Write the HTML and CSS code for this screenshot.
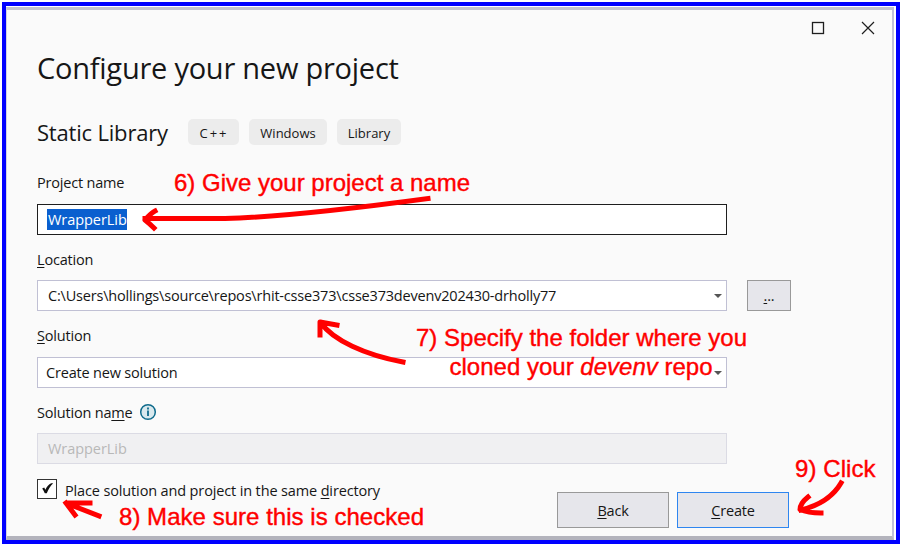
FILE: index.html
```html
<!DOCTYPE html>
<html lang="en">
<head>
<meta charset="utf-8">
<title>Configure your new project</title>
<link rel="stylesheet" href="styles.css">
</head>
<body>
<main class="frame">
  <div class="dialog">
    <header class="titlebar">
      <svg width="14" height="14" viewBox="0 0 14 14"><rect x="1.5" y="1.5" width="11" height="11" fill="none" stroke="#1e1e1e" stroke-width="1.3"/></svg>
      <svg width="14" height="14" viewBox="0 0 14 14"><path d="M1 1l12 12M13 1L1 13" stroke="#1e1e1e" stroke-width="1.2"/></svg>
    </header>
    <h1 class="title">Configure your new project</h1>
    <div class="template">
      <h2 class="template-name">Static Library</h2>
      <span class="chip chip-cpp">C++</span>
      <span class="chip chip-windows">Windows</span>
      <span class="chip chip-library">Library</span>
    </div>
    <div class="label label-first"><span>Project name</span></div>
    <div class="field field-active"><span class="selection">WrapperLib</span></div>
    <div class="label label-tight"><span><u>L</u>ocation</span></div>
    <div class="row">
      <div class="field"><span>C:\Users\hollings\source\repos\rhit-csse373\csse373devenv202430-drholly77</span><i class="caret"></i></div>
      <button class="button browse"><u>.</u>..</button>
    </div>
    <div class="label"><span><u>S</u>olution</span></div>
    <div class="field field-select"><span>Create new solution</span><i class="caret"></i></div>
    <div class="label label-tight"><span>Solution na<u>m</u>e</span>
      <svg class="info" width="18" height="18" viewBox="0 0 18 18"><circle cx="9" cy="9" r="7.3" fill="#d9e9ee" stroke="#0f6b8c" stroke-width="1.5"/><path d="M9 7.600v5.400M9 4.600v1.900" stroke="#0f6b8c" stroke-width="1.800"/></svg>
    </div>
    <div class="field field-disabled"><span class="wide">WrapperLib</span></div>
    <div class="bottom">
      <div class="check">
        <span class="box"><svg width="18" height="18" viewBox="0 0 18 18"><path d="M4.200 8.600L6.200 7.600L7.400 9.800C8.800 6.600 10.800 4.200 13.200 3.200L15.200 3.200C12.600 5.800 10.200 9.400 8.800 13.200H6.800C6 11.400 5.200 10 4.200 8.600Z" fill="#111"/></svg></span>
        <span class="check-text">Place solution and project in the same <u>d</u>irectory</span>
      </div>
      <button class="button"><u>B</u>ack</button>
      <button class="button primary"><u>C</u>reate</button>
    </div>
  </div>
</main>
<svg class="notes" width="904" height="546" viewBox="0 0 904 546">
  <g class="note-text">
    <text x="174" y="191" textLength="296">6) Give your project a name</text>
    <text x="416" y="345.500" textLength="331">7) Specify the folder where you</text>
    <text x="449.500" y="375" textLength="263">cloned your <tspan class="em">devenv</tspan> repo</text>
    <text x="119" y="525" textLength="305">8) Make sure this is checked</text>
    <text x="795" y="477" textLength="80.500">9) Click</text>
  </g>
  <g class="arrows">
    <path d="M428 198.500C350 209 280 217 225 218.500H145M155 211Q151 213 145 220Q150 224 154 228"/>
    <path d="M403 362C365 355 333 340 321 323M320 335V322L337 325"/>
    <path d="M99 516L66 503H90M66 503L75 515"/>
    <path d="M841 483C834 495 821 505 801 510M808 497C803 501 800 505 800 509.500Q808 513 821 513"/>
  </g>
</svg>
</body>
</html>
```
FILE: styles.css
```css
* { box-sizing: border-box; }
body { margin: 0; width: 904px; height: 546px; overflow: hidden; background: #fff; font-family: "Open Sans", "Noto Sans", sans-serif; font-size: 14.500px; letter-spacing: -0.190px; color: #161616; }
.frame { width: 898px; height: 542px; margin: 2px; border: 4px solid #00f; padding: 1px 2px 0 0; background: #fff; }
.dialog { height: 533px; padding: 0 30px; border: 1px solid #d3d3df; border-top: 3px solid #c3c3cf; border-right: 2px solid #c0c0d8; border-bottom: 4px solid #b3b3bc; background: #fafafa; display: flex; flex-direction: column; align-items: flex-start; }
.dialog > * { flex-shrink: 0; }
.titlebar { align-self: flex-end; display: flex; gap: 36px; height: 38px; padding-top: 11px; margin-right: -13px; }
h1, h2 { margin: 0; font-weight: 400; white-space: nowrap; }
.title { font-size: 29px; line-height: 40px; letter-spacing: -0.240px; }
.template { display: flex; align-items: center; gap: 10px; height: 26px; margin-top: 31px; }
.template-name { width: 141px; font-size: 22px; line-height: 26px; }
.chip { height: 26px; border-radius: 5px; background: #ececec; display: flex; align-items: center; justify-content: center; font-size: 13px; letter-spacing: 0; padding-top: 1px; }
.chip-cpp { width: 51px; letter-spacing: 2px; padding-left: 1px; }
.chip-windows { width: 78px; }
.chip-library { width: 64px; }
.label { display: flex; align-items: center; height: 20px; margin: 14px 0 12px; white-space: nowrap; }
.label-first { margin-top: 27px; }
.label-tight { margin-bottom: 11px; }
u { text-underline-offset: 2px; }
.field { width: 690px; height: 31px; border: 1px solid #c0c0d4; background: #fff; display: flex; align-items: center; padding: 0 4px 0 10px; white-space: nowrap; }
.field-active { border-color: #1e1e1e; padding-left: 9px; }
.field-select { padding-left: 8px; }
.field-disabled { background: #f0f0f2; border-color: #dbdbe4; color: #b8b8b8; }
.selection { background: #0a5fcf; color: #fff; line-height: 21px; letter-spacing: -0.050px; padding-left: 1px; }
.wide { letter-spacing: -0.050px; }
.caret { margin-left: auto; border: 4px solid transparent; border-top-color: #555; border-bottom: 0; }
.row { display: flex; gap: 20px; }
.button { width: 112px; height: 36px; padding: 0; border: 1px solid #999; background: #e6e6eb; font: inherit; letter-spacing: inherit; color: inherit; }
.primary { border-color: #2e86f0; margin-left: 8px; }
.browse { width: 44px; height: 31px; }
.info { margin-left: 6px; }
.bottom { display: flex; align-items: flex-end; margin-top: 15px; height: 49px; }
.check { width: 520px; height: 49px; display: flex; align-items: flex-start; gap: 8px; white-space: nowrap; }
.check-text { line-height: 20px; margin-top: 2px; letter-spacing: -0.140px; }
.box { width: 20px; height: 20px; border: 1px solid #333; background: #fff; }
.box svg { display: block; }
.notes { position: absolute; left: 0; top: 0; }
.note-text { font-family: "Liberation Sans", Arial, sans-serif; font-size: 24px; letter-spacing: 0; fill: #f00; stroke: #f00; stroke-width: 0.400px; }
.em { font-style: italic; }
.arrows { fill: none; stroke: #f00; stroke-width: 5px; stroke-linecap: square; stroke-linejoin: round; }
```
